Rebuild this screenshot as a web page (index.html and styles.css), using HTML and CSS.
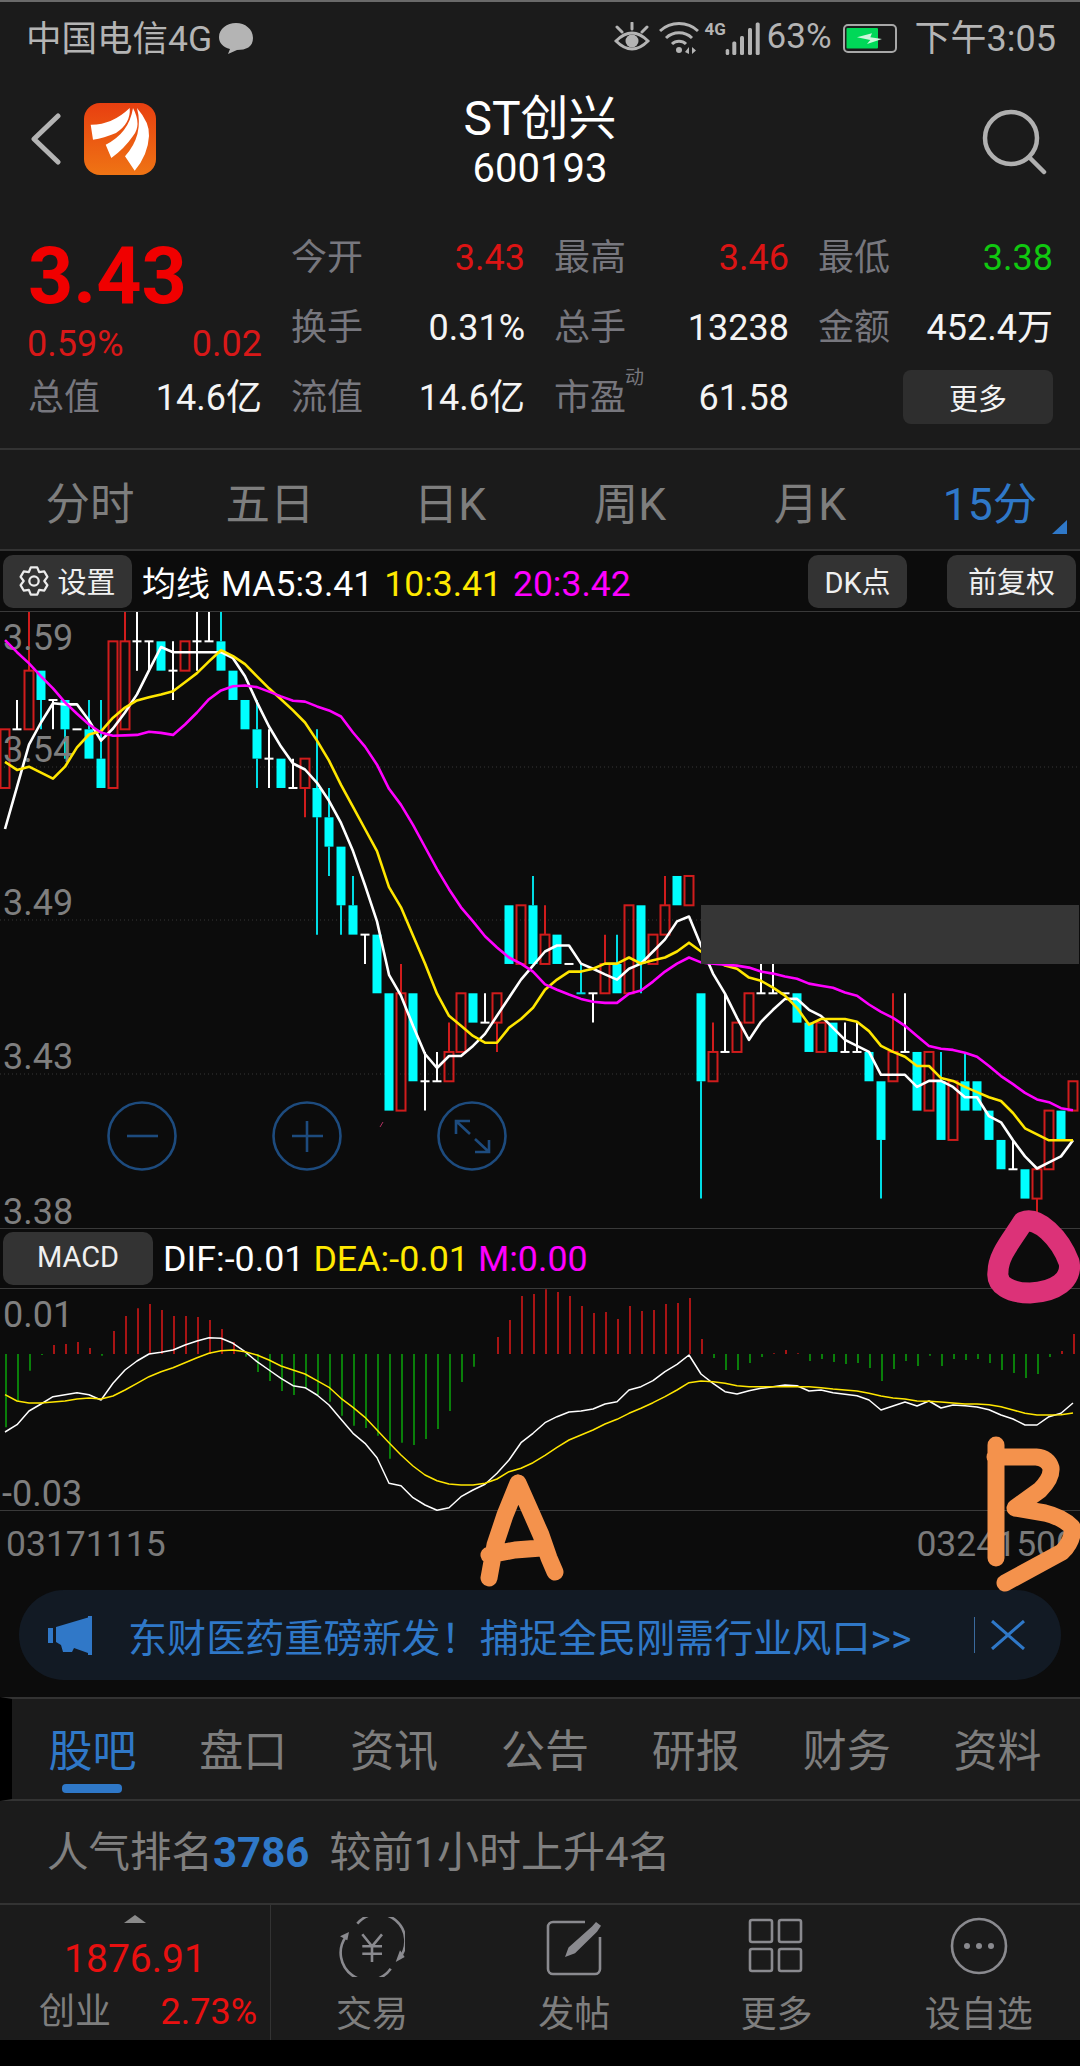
FILE: index.html
```html
<!DOCTYPE html>
<html lang="zh">
<head>
<meta charset="utf-8">
<title>ST创兴 600193</title>
<link rel="stylesheet" href="styles.css">
</head>
<body>
<div class="phone">
  <header class="statusbar">
    <div class="status-group">
      <span class="status-text">中国电信4G</span>
      <svg class="ic-bubble" viewBox="0 0 34 31"><path d="M17 0C26 0 34 6 34 15S27 27 18 27L9 31 11 26C4 24 0 20 0 14 0 6 8 0 17 0Z"/></svg>
    </div>
    <div class="status-group">
      <svg class="ic-eye" viewBox="0 0 36 32"><path d="M2 19Q18 3 34 19 18 35 2 19Z"/><circle cx="18" cy="19" r="6.5"/><path d="M18 1V7M3 5 8 10M33 5 28 10"/></svg>
      <svg class="ic-wifi" viewBox="0 0 40 32"><path d="M1 9A28 28 0 0 1 39 9M7 16A19 19 0 0 1 33 16M13 22A10 10 0 0 1 27 22"/><circle cx="20" cy="28" r="3"/><path class="solid" d="M30 32V25L26 30ZM33 25V32L37 28.500Z"/></svg>
      <span class="net">4G</span>
      <svg class="ic-signal" viewBox="0 0 35 33"><rect x="0.700" y="27" width="3.500" height="6" rx="1.500"/><rect x="7.300" y="19.500" width="4" height="13.500" rx="1.500"/><rect x="15" y="14" width="4" height="19" rx="1.500"/><rect x="23" y="6" width="4" height="27" rx="1.500"/><rect x="30.700" y="0.500" width="4" height="32.500" rx="1.500"/></svg>
      <span class="status-text battery-pct">63%</span>
      <svg class="ic-battery" viewBox="0 0 54 29"><rect class="shell" x="1" y="1" width="52" height="27" rx="4"/><rect class="charge" x="3.500" y="4" width="31.500" height="20.500" rx="1"/><path class="bolt" d="M14 13.300 29 9.300 27.300 13.300 39 15 24 20 27.300 16Z"/></svg>
      <span class="status-text clock">下午3:05</span>
    </div>
  </header>

  <nav class="navbar">
    <div class="nav-left">
      <svg class="ic-back" viewBox="0 0 30 52"><path d="M27 3 3 26 27 49"/></svg>
      <svg class="logo" viewBox="0 0 72 72"><defs><linearGradient id="logoFill" x1="0" y1="0" x2="0" y2="1"><stop offset="0" stop-color="#e83f10"/><stop offset="1" stop-color="#ef7414"/></linearGradient></defs><rect width="72" height="72" rx="16" fill="url(#logoFill)"/><path fill="#fff" d="M6.700 21.700Q28 22 45.700 5 47 20 32 30 20 35 9 36.700ZM21.700 41.700Q45 30 49 5 58 22 49 33 40 46 27.300 55ZM41 53.300Q60 32 53 5 66 20 65 33 64 52 50.700 67.700Z"/></svg>
    </div>
    <div class="nav-title">
      <div class="stock-name">ST创兴</div>
      <div class="stock-code">600193</div>
    </div>
    <div class="nav-right">
      <svg class="ic-search" viewBox="0 0 66 66"><circle cx="30" cy="29" r="26"/><path d="M49 49 63 63"/></svg>
    </div>
  </nav>

  <section class="quote">
    <div class="price-block">
      <div class="price">3.43</div>
      <div class="price-change"><span>0.59%</span><span>0.02</span></div>
    </div>
    <div class="stat"><span class="stat-label">今开</span><span class="up">3.43</span></div>
    <div class="stat"><span class="stat-label">最高</span><span class="up">3.46</span></div>
    <div class="stat"><span class="stat-label">最低</span><span class="down">3.38</span></div>
    <div class="stat"><span class="stat-label">换手</span><span>0.31%</span></div>
    <div class="stat"><span class="stat-label">总手</span><span>13238</span></div>
    <div class="stat"><span class="stat-label">金额</span><span>452.4万</span></div>
    <div class="stat"><span class="stat-label">总值</span><span>14.6亿</span></div>
    <div class="stat"><span class="stat-label">流值</span><span>14.6亿</span></div>
    <div class="stat"><span class="stat-label has-sup">市盈<sup class="sup">动</sup></span><span>61.58</span></div>
    <div class="more-btn">更多</div>
  </section>

  <div class="periods">
    <span>分时</span><span>五日</span><span>日K</span><span>周K</span><span>月K</span>
    <span class="period-active">15分</span>
  </div>

  <div class="toolbar">
    <div class="tool-btn tool-settings">
      <svg class="ic-gear" viewBox="0 0 32 32"><path d="M12.600 1.400H19.400L21.500 6.500 27 5.800 30.300 11.600 27 16 30.300 20.400 27 26.200 21.500 25.500 19.400 30.600H12.600L10.500 25.500 5 26.200 1.700 20.400 5 16 1.700 11.600 5 5.800 10.500 6.500Z"/><circle cx="16" cy="16" r="5"/></svg>
      <span>设置</span>
    </div>
    <div class="legend">
      <span class="legend-cjk">均线</span><span>MA5:3.41</span><span class="c-yellow">10:3.41</span><span class="c-magenta">20:3.42</span>
    </div>
    <div class="tool-btn tool-dk">DK点</div>
    <div class="tool-btn tool-fq">前复权</div>
  </div>

  <div class="kchart">
    <svg id="kline" class="chart-svg" viewBox="0 0 1080 616" width="1080" height="616">
      <path class="grid" d="M0 155H1080M0 308H1080M0 462H1080"/>
      <g id="k-candles"></g>
      <text class="axis" x="3" y="38">3.59</text>
      <text class="axis" x="3" y="150">3.54</text>
      <text class="axis" x="3" y="303">3.49</text>
      <text class="axis" x="3" y="457">3.43</text>
      <text class="axis" x="3" y="612">3.38</text>
      <g id="k-lines"></g>
      <rect class="k-mask" x="701" y="293" width="378" height="59"/>
      <path class="tick" d="M383 510 380 515"/>
      <g class="zoom-btn">
        <circle cx="142" cy="524" r="33.500"/><path d="M127 524H158"/>
        <circle cx="307" cy="524" r="33.500"/><path d="M292 524H323M307 509V540"/>
        <circle cx="472" cy="524" r="33.500"/><path d="M456 509 470 522M475 527 489 540M456 522V509H470M489 528V540H475"/>
      </g>
    </svg>
  </div>

  <div class="toolbar toolbar-macd">
    <div class="tool-btn tool-macd">MACD</div>
    <div class="legend legend-macd">
      <span>DIF:-0.01</span><span class="c-yellow">DEA:-0.01</span><span class="c-magenta">M:0.00</span>
    </div>
  </div>

  <div class="macd">
    <svg id="macd" class="chart-svg" viewBox="0 0 1080 221" width="1080" height="221">
      <g id="m-bars"></g>
      <text class="axis" x="3" y="38">0.01</text>
      <text class="axis" x="2" y="217">-0.03</text>
      <g id="m-lines"></g>
    </svg>
  </div>

  <div class="axis-row"><span>03171115</span><span>03241500</span></div>

  <div class="banner-wrap">
    <div class="banner">
      <svg class="ic-horn" viewBox="0 0 46 39"><path d="M1 12H6V27H1ZM9 11 41 1.500V0H45V39H41V37L27 32 25 36H16L14 29 9 26Z"/></svg>
      <span class="banner-text">东财医药重磅新发！捕捉全民刚需行业风口&gt;&gt;</span>
      <span class="banner-divider"></span>
      <svg class="ic-close" viewBox="0 0 34 30"><path d="M1 1 33 29M33 1 1 29"/></svg>
    </div>
  </div>

  <div class="subtabs">
    <div class="subtab subtab-active"><span>股吧</span><i class="subtab-bar"></i></div>
    <div class="subtab"><span>盘口</span></div>
    <div class="subtab"><span>资讯</span></div>
    <div class="subtab"><span>公告</span></div>
    <div class="subtab"><span>研报</span></div>
    <div class="subtab"><span>财务</span></div>
    <div class="subtab"><span>资料</span></div>
  </div>

  <div class="rank">
    <span>人气排名</span><b class="rank-num">3786</b><span class="rank-note">较前1小时上升4名</span>
  </div>

  <footer class="bottom">
    <div class="index-box">
      <i class="index-arrow"></i>
      <div class="index-value">1876.91</div>
      <div class="index-row"><span class="index-name">创业</span><span>2.73%</span></div>
    </div>
    <div class="bottom-nav">
      <div class="nav-item">
        <svg class="nav-ic" viewBox="0 0 66 60"><path d="M18.300 6.700A27 27 0 0 1 60 41.700M51.700 51.700A27 27 0 0 1 6.700 20M23.300 17.300 33 29.300 43 17.300M23.300 29.300H43M23.300 36.700H43M33 29.300V45"/><path class="solid" d="M56.700 45 65.700 40 61 33.300ZM1 19.300 10 15 8.300 23.300Z"/></svg>
        <span>交易</span>
      </div>
      <div class="nav-item">
        <svg class="nav-ic" viewBox="0 0 66 60"><path d="M44 5H12A5 5 0 0 0 7 10V52A5 5 0 0 0 12 57H54A5 5 0 0 0 59 52V20"/><path class="solid" d="M24 40 27.500 30.500 51 9.500 55 5 60 8.700 56 14.700 34 36.300Z"/></svg>
        <span>发帖</span>
      </div>
      <div class="nav-item">
        <svg class="nav-ic" viewBox="0 0 66 60"><rect x="6" y="3" width="22" height="22" rx="2"/><rect x="35" y="3" width="22" height="22" rx="2"/><rect x="6" y="32" width="22" height="22" rx="2"/><rect x="35" y="32" width="22" height="22" rx="2"/></svg>
        <span>更多</span>
      </div>
      <div class="nav-item">
        <svg class="nav-ic" viewBox="0 0 66 60"><circle cx="33" cy="29" r="27"/><circle class="solid" cx="21" cy="29" r="3"/><circle class="solid" cx="33" cy="29" r="3"/><circle class="solid" cx="45" cy="29" r="3"/></svg>
        <span>设自选</span>
      </div>
    </div>
  </footer>
  <div class="gesture-strip"></div>

  <svg class="annotations" viewBox="0 0 1080 2066" width="1080" height="2066">
    <path class="ink-pink" d="M998 1272C998 1255 1012 1240 1023 1222 1038 1216 1060 1238 1069 1262 1073 1280 1055 1292 1030 1293 1010 1293 996 1285 998 1272Z"/>
    <path class="ink-orange" d="M518 1483 505 1515 495 1545 489 1578M518 1483 530 1510 541 1535 549 1558 555 1572M489 1555 515 1550 541 1548"/>
    <path class="ink-orange" d="M996 1445V1558M995 1457H1036Q1048 1458 1051 1468 1052 1478 1040 1490L1015 1508 1045 1513Q1062 1517 1072 1527 1074 1540 1062 1552L1005 1583"/>
  </svg>
</div>
<script src="script.js"></script>
</body>
</html>
```

FILE: styles.css
```css
* { box-sizing: border-box; }
html, body { margin: 0; padding: 0; background: #1b1b1b; }
body { font-family: Roboto, "Noto Sans CJK SC", sans-serif; color: #f4f4f4; }
.phone { position: relative; width: 1080px; height: 2066px; overflow: hidden; background: #1b1b1b; display: flex; flex-direction: column; }

/* status bar */
.statusbar { height: 74px; flex: none; border-top: 2px solid #6a6a6a; padding: 0 24px 0 26px; display: flex; justify-content: space-between; align-items: center; font-size: 36px; color: #b4b4b4; }
.status-group { display: flex; align-items: center; }
.status-text { margin-bottom: 6px; font-size: 35.500px; }
.statusbar svg { display: block; flex: none; }
.ic-bubble { width: 34px; height: 31px; margin-left: 7px; fill: #b4b4b4; }
.ic-eye { width: 36px; height: 32px; fill: none; stroke: #b4b4b4; stroke-width: 3; stroke-linecap: round; }
.ic-eye circle { fill: #b4b4b4; stroke: none; }
.ic-wifi { width: 40px; height: 32px; margin-left: 9px; fill: none; stroke: #b4b4b4; stroke-width: 3; }
.ic-wifi circle, .ic-wifi .solid { fill: #b4b4b4; stroke: none; }
.net { font-size: 17px; font-weight: 700; line-height: 18px; margin: -18px 0 0 6px; width: 20px; }
.ic-signal { width: 35px; height: 33px; fill: #b4b4b4; }
.battery-pct { font-size: 35px; margin: 0 0 3px 7px; }
.ic-battery { width: 54px; height: 29px; margin-left: 11px; }
.ic-battery .shell { fill: none; stroke: #a8a8a8; stroke-width: 2; }
.ic-battery .charge { fill: #00d858; }
.ic-battery .bolt { fill: #cdf5dc; }
.clock { margin-left: 18px; font-size: 36px; }

/* nav */
.navbar { height: 148px; flex: none; padding-bottom: 18px; display: grid; grid-template-columns: 1fr auto 1fr; align-items: center; }
.nav-left { display: flex; align-items: center; padding-left: 31px; }
.ic-back { width: 30px; height: 52px; fill: none; stroke: #b4b4b4; stroke-width: 5; stroke-linecap: round; stroke-linejoin: round; }
.logo { width: 72px; height: 72px; margin-left: 23px; }
.nav-title { text-align: center; margin-top: 9px; color: #fff; }
.stock-name { font-size: 48px; line-height: 51px; }
.stock-code { font-size: 40px; line-height: 50px; }
.nav-right { display: flex; justify-content: flex-end; padding: 5px 33px 0 0; }
.ic-search { width: 66px; height: 66px; fill: none; stroke: #b0b0b0; stroke-width: 4.500; stroke-linecap: round; }

/* quote */
.quote { height: 228px; flex: none; padding: 1px 28px 15px 28px; border-bottom: 2px solid #333; display: grid; grid-template-columns: 234px 234px 235px 235px; grid-template-rows: 70px 70px 70px; column-gap: 29px; font-size: 36px; }
.price-block { grid-row: 1 / span 2; grid-column: 1; display: flex; flex-direction: column; }
.price { height: 105px; font-size: 79px; font-weight: 700; line-height: 106px; color: #f00000; }
.price-change { display: flex; justify-content: space-between; align-items: baseline; height: 32px; line-height: 32px; color: #d81818; margin-left: -1px; }
.stat { display: flex; justify-content: space-between; align-items: baseline; line-height: 70px; }
.stat-label { color: #77777e; }
.has-sup { position: relative; }
.sup { position: absolute; left: 71px; top: 4px; font-size: 19px; line-height: 22px; color: #77777e; }
.up { color: #dc1414; }
.down { color: #10c810; }
.more-btn { align-self: center; justify-self: end; width: 150px; height: 54px; margin-top: -3px; background: #2e2e2e; border-radius: 8px; display: flex; align-items: center; justify-content: center; font-size: 29px; }

/* period tabs */
.periods { height: 101px; flex: none; padding-top: 1px; border-bottom: 2px solid #333; display: grid; grid-template-columns: repeat(6, 1fr); align-items: center; justify-items: center; font-size: 44.500px; color: #7e7e7e; }
.period-active { position: relative; color: #2f78c8; }
.period-active::after { content: ""; position: absolute; right: -30px; bottom: -1px; border-style: solid; border-width: 0 0 14px 15px; border-color: transparent transparent #2f78c8 transparent; }

/* toolbars */
.toolbar { height: 61px; flex: none; background: #0c0c0c; border-bottom: 1px solid #3a3a3a; display: flex; align-items: center; padding: 0 4px 0 3px; }
.tool-btn { height: 53px; padding-bottom: 3px; background: #333; border-radius: 10px; display: flex; align-items: center; justify-content: center; font-size: 29px; color: #f0f0f0; }
.tool-settings { width: 129px; gap: 8px; }
.ic-gear { width: 30px; height: 30px; margin-top: 3px; fill: none; stroke: #ececec; stroke-width: 2.400; stroke-linejoin: round; }
.legend { display: flex; align-items: baseline; gap: 11px; margin-left: 10px; font-size: 35.500px; color: #fff; }
.legend-cjk { font-size: 34px; }
.c-yellow { color: #ffe900; }
.c-magenta { color: #ff00ff; }
.tool-dk { width: 99px; margin-left: auto; }
.tool-fq { width: 129px; margin-left: 40px; }
.toolbar-macd { height: 60px; }
.tool-macd { width: 150px; }
.legend-macd { font-size: 35.800px; margin-left: 10px; gap: 9px; }

/* charts */
.kchart { height: 617px; flex: none; background: #0c0c0c; border-bottom: 1px solid #3a3a3a; }
.macd { height: 222px; flex: none; background: #0c0c0c; border-bottom: 1px solid #3a3a3a; }
.chart-svg { display: block; overflow: visible; }
.grid { fill: none; stroke: #363636; stroke-width: 1; stroke-dasharray: 1 3; }
.axis { font-size: 36px; fill: #7f7f7f; }
.k-mask { fill: #363636; }
.tick { stroke: #b03060; stroke-width: 1; }
.zoom-btn { fill: none; stroke: #1d4b7e; stroke-width: 2.600; }

/* date axis */
.axis-row { height: 65px; flex: none; background: #0c0c0c; padding: 0 4px 0 6px; display: flex; justify-content: space-between; align-items: center; font-size: 35.500px; color: #7a7a7a; }

/* banner */
.banner-wrap { height: 121px; flex: none; background: #0c0c0c; padding: 14px 19px 17px 19px; }
.banner { height: 90px; border-radius: 45px; background: #121a24; display: flex; align-items: center; padding-left: 28px; color: #2f78c8; }
.ic-horn { width: 46px; height: 39px; fill: #3078c8; flex: none; }
.banner-text { margin-left: 35px; font-size: 39.100px; white-space: nowrap; width: 846px; }
.banner-divider { width: 1px; height: 36px; background: #3a6a9e; flex: none; }
.ic-close { width: 34px; height: 30px; margin-left: 16px; fill: none; stroke: #2f78c8; stroke-width: 3; flex: none; }

/* sub tabs */
.subtabs { height: 104px; flex: none; border-top: 2px solid #333; border-bottom: 2px solid #333; border-left: 12px solid #000; padding: 28px 7px 0 5px; display: grid; grid-template-columns: repeat(7, 1fr); font-size: 44px; color: #7e7e7e; }
.subtab { display: flex; flex-direction: column; align-items: center; gap: 7px; line-height: 50px; }
.subtab-active { color: #2f78c8; }
.subtab-bar { display: block; width: 60px; height: 9px; border-radius: 4px; background: #2f78c8; }

/* rank */
.rank { height: 104px; flex: none; padding: 2px 0 0 47px; border-bottom: 2px solid #333; display: flex; align-items: baseline; line-height: 100px; font-size: 41.500px; color: #808080; }
.rank-num { color: #2f78c8; font-weight: 700; font-size: 42px; }
.rank-note { margin-left: 20px; font-size: 42px; }

/* bottom */
.bottom { height: 135px; flex: none; display: flex; }
.index-box { width: 271px; flex: none; border-right: 1px solid #333; display: flex; flex-direction: column; align-items: center; padding-top: 10px; color: #e81010; }
.index-arrow { display: block; width: 0; height: 0; border-style: solid; border-width: 0 11px 8px 11px; border-color: transparent transparent #8a8a8a transparent; }
.index-value { font-size: 39px; line-height: 44px; margin-top: 14px; }
.index-row { width: 100%; display: flex; justify-content: space-between; align-items: baseline; padding: 0 13px 0 39px; font-size: 36px; line-height: 44px; margin-top: 9px; }
.index-name { color: #7e7e7e; }
.bottom-nav { flex: 1; display: grid; grid-template-columns: repeat(4, 1fr); }
.nav-item { display: flex; flex-direction: column; align-items: center; font-size: 36px; line-height: 44px; color: #7e7e7e; padding-top: 12px; }
.nav-ic { width: 66px; height: 60px; fill: none; stroke: #8a8a8f; stroke-width: 2.600; stroke-linejoin: round; display: block; margin-bottom: 16px; }
.nav-ic .solid { fill: #8a8a8f; stroke: none; }
.gesture-strip { flex: 1; background: #000; }

/* pen annotations drawn on the screenshot */
.annotations { position: absolute; left: 0; top: 0; pointer-events: none; }
.ink-orange { fill: none; stroke: #f4924c; stroke-width: 17; stroke-linecap: round; stroke-linejoin: round; }
.ink-pink { fill: none; stroke: #dc3278; stroke-width: 21; stroke-linejoin: round; }
```

FILE: script.js
```js
(function () {
  var NS = 'http://www.w3.org/2000/svg';
  var STEP = 29.33, CX0 = 5, DX = 12;
  var RED = '#d01c1c', CYAN = '#00ffff', CYANW = '#00dce4', WHITE = '#ffffff';

  function cx(i) { return CX0 + DX * i; }
  function ky(k) { return k * STEP; }
  function add(parent, tag, attrs) {
    var el = document.createElementNS(NS, tag);
    for (var a in attrs) el.setAttribute(a, attrs[a]);
    parent.appendChild(el);
    return el;
  }
  function vline(g, x, y1, y2, c, w) {
    add(g, 'line', { x1: x, x2: x, y1: y1, y2: y2, stroke: c, 'stroke-width': w || 2 });
  }

  // [type, bodyTop, bodyBottom, high, low] in 0.01 price levels from the top of the chart
  // r = up (hollow red), c = down (solid cyan), w = flat (white), d = flat (cyan)
  var candles = [
    ['r',4,6],['w',4,4,3,4],['r',2,4,0,4],['c',2,3,2,4],['w',3,3,3,4],['c',3,4,3,5],['w',4,4,4,4],['c',4,5,3,5],['c',5,6,3,6],['r',1,6],
    ['r',1,4,0,4],['w',1,1,0,2],['w',1,1,1,2],['c',1,2],['w',2,2,1,3],['r',1,2],['w',1,1,0,2],['w',1,1,0,1],['c',1,2,0,2],['c',2,3],
    ['c',3,4],['c',4,5,3,6],['w',5,5,4,6],['c',5,6],['w',6,6,5,6],['r',5,6,5,7],['c',6,7,4,11],['c',7,8,6,9],['c',8,10,8,11],['c',10,11,9,11],
    ['w',11,11,11,12],['c',11,13],['c',13,17],['r',13,17,12,17],['c',13,16],['w',16,16,15,17],['w',16,16,15,16],['r',15,16,14,16],['r',13,15],['c',13,14],
    ['w',14,14,13,14],['r',13,14,13,15],['c',10,12],['r',10,12],['c',10,12,9,12],['r',11,12,10,12],['c',11,12],['w',12,12,12,12],['d',13,13,12,13],['w',13,13,13,14],
    ['r',12,13,11,13],['c',12,13,11,13],['r',10,13],['c',10,12,10,13],['r',11,12],['r',10,11,9,11],['c',9,10],['r',9,10],['c',13,16,13,20],['r',15,16,14,16],
    ['w',15,15,13,15],['r',14,15],['r',13,14],['w',13,13,12,13],['w',13,13,12,13],['w',13,13,13,13],['c',13,14],['c',14,15],['r',14,15],['c',14,15],
    ['w',15,15,14,15],['w',15,15,14,15],['c',15,16],['c',16,18,16,20],['r',15,16,13,16],['w',15,15,13,15],['c',15,17],['r',15,17],['c',16,18,15,18],['r',16,18],
    ['c',16,17,15,17],['c',16,17],['c',17,18],['c',18,19],['w',19,19,18,19],['c',19,20],['r',19,20,19,21],['r',17,19],['c',17,18],['r',16,17]
  ];

  var gC = document.getElementById('k-candles');
  candles.forEach(function (c, i) {
    var t = c[0], x = cx(i), top = ky(c[1]), bot = ky(c[2]);
    var hi = c[3] === undefined ? c[1] : c[3], lo = c[4] === undefined ? c[2] : c[4];
    if (t === 'w' || t === 'd') {
      var col = t === 'w' ? WHITE : CYANW;
      vline(gC, x, ky(hi), ky(lo), col);
      add(gC, 'line', { x1: x - 4.5, x2: x + 4.5, y1: top, y2: top, stroke: col, 'stroke-width': 2 });
      return;
    }
    var wick = t === 'r' ? RED : CYANW;
    if (hi < c[1]) vline(gC, x, ky(hi), top, wick);
    if (lo > c[2]) vline(gC, x, bot, ky(lo), wick);
    if (t === 'r') {
      add(gC, 'rect', { x: x - 4.5, y: top, width: 9, height: bot - top, fill: 'none', stroke: RED, 'stroke-width': 2 });
    } else {
      add(gC, 'rect', { x: x - 4.5, y: top, width: 9, height: bot - top, fill: CYAN });
    }
  });

  function polyline(g, vals, toY, color, width) {
    var pts = vals.map(function (v, i) { return cx(i) + ',' + toY(v).toFixed(1); }).join(' ');
    add(g, 'polyline', { points: pts, fill: 'none', stroke: color, 'stroke-width': width, 'stroke-linejoin': 'round' });
  }

  // moving averages, sampled per candle in chart pixels x 2.489
  var ma5 = [545,440,335,280,232,235,235,275,325,295,255,210,150,92,105,105,105,105,105,120,165,230,290,340,382,397,430,475,530,600,685,775,908,960,1035,1105,1140,1110,1110,1085,1055,1010,965,920,885,850,835,835,880,893,907,920,893,880,850,820,775,763,835,905,955,1015,1070,1025,995,968,968,995,1010,1040,1070,1085,1100,1157,1157,1157,1187,1172,1172,1187,1213,1213,1260,1275,1320,1360,1390,1375,1360,1320];
  var ma10 = [378,398,390,405,420,390,342,310,302,268,243,225,217,210,202,180,157,128,100,115,135,165,195,222,250,280,325,375,435,490,545,600,690,740,810,880,955,1010,1035,1060,1077,1077,1040,1018,990,945,920,900,900,893,880,880,865,880,872,865,850,828,850,865,885,893,915,923,940,960,990,1032,1018,1018,1018,1025,1048,1085,1100,1112,1135,1135,1165,1172,1187,1200,1213,1222,1252,1290,1305,1320,1320,1320];
  var ma20 = [75,105,133,165,195,230,258,285,305,313,312,311,303,306,311,285,255,222,200,190,188,192,203,215,226,228,240,250,265,305,340,385,445,485,535,590,645,695,740,775,812,840,865,880,900,932,945,957,968,975,978,978,955,947,925,900,880,865,877,880,883,885,890,900,905,912,918,930,935,940,952,960,982,1000,1015,1035,1060,1085,1092,1095,1102,1112,1135,1160,1180,1202,1218,1225,1240,1245];
  function kY(v) { return v / 2.489 - 2; }
  var gL = document.getElementById('k-lines');
  polyline(gL, ma5, kY, '#ffffff', 2.6);
  polyline(gL, ma10, kY, '#ffe600', 2.6);
  polyline(gL, ma20, kY, '#ff00ff', 2.6);

  // MACD, sampled per candle in chart pixels x 3
  var bars = [622,545,452,405,375,372,366,384,407,333,288,265,252,270,288,288,291,300,327,366,410,456,483,513,525,505,525,545,587,617,624,647,716,668,675,657,627,573,486,440,402,351,300,228,222,208,216,228,258,279,276,297,258,273,270,252,249,234,357,414,450,450,429,411,400,390,400,423,417,426,432,429,444,483,447,423,438,407,438,417,420,417,429,450,459,474,462,411,393,342];
  var dif = [636,614,573,552,530,524,518,524,540,490,450,423,402,397,390,375,363,353,355,370,395,425,450,475,497,503,525,555,598,640,670,713,790,797,833,855,871,863,830,810,793,760,720,668,640,608,590,576,573,567,552,545,510,500,482,455,433,405,462,490,515,522,512,505,500,495,497,513,510,518,523,527,540,570,558,546,558,543,564,555,557,561,569,585,597,615,615,590,580,549];
  var dea = [524,543,549,549,546,543,537,534,537,528,510,490,470,455,443,428,413,400,392,390,395,405,420,438,450,462,482,502,535,562,592,630,668,705,738,765,782,792,795,795,790,777,755,745,728,706,682,660,645,630,612,598,580,565,548,530,510,488,483,485,490,497,500,500,500,500,500,500,503,507,510,513,520,528,534,537,543,544,546,549,552,552,554,560,570,580,585,585,584,579];
  function mY(v) { return v / 3 - 69; }
  var ZERO = mY(402);
  var gB = document.getElementById('m-bars');
  bars.forEach(function (v, i) {
    if (v === 402) return;
    vline(gB, cx(i) + 1, ZERO, mY(v), v < 402 ? '#a81414' : '#0a7f0a');
  });
  var gM = document.getElementById('m-lines');
  polyline(gM, dif, mY, '#ffffff', 1.5);
  polyline(gM, dea, mY, '#ffe600', 1.5);
})();
```
